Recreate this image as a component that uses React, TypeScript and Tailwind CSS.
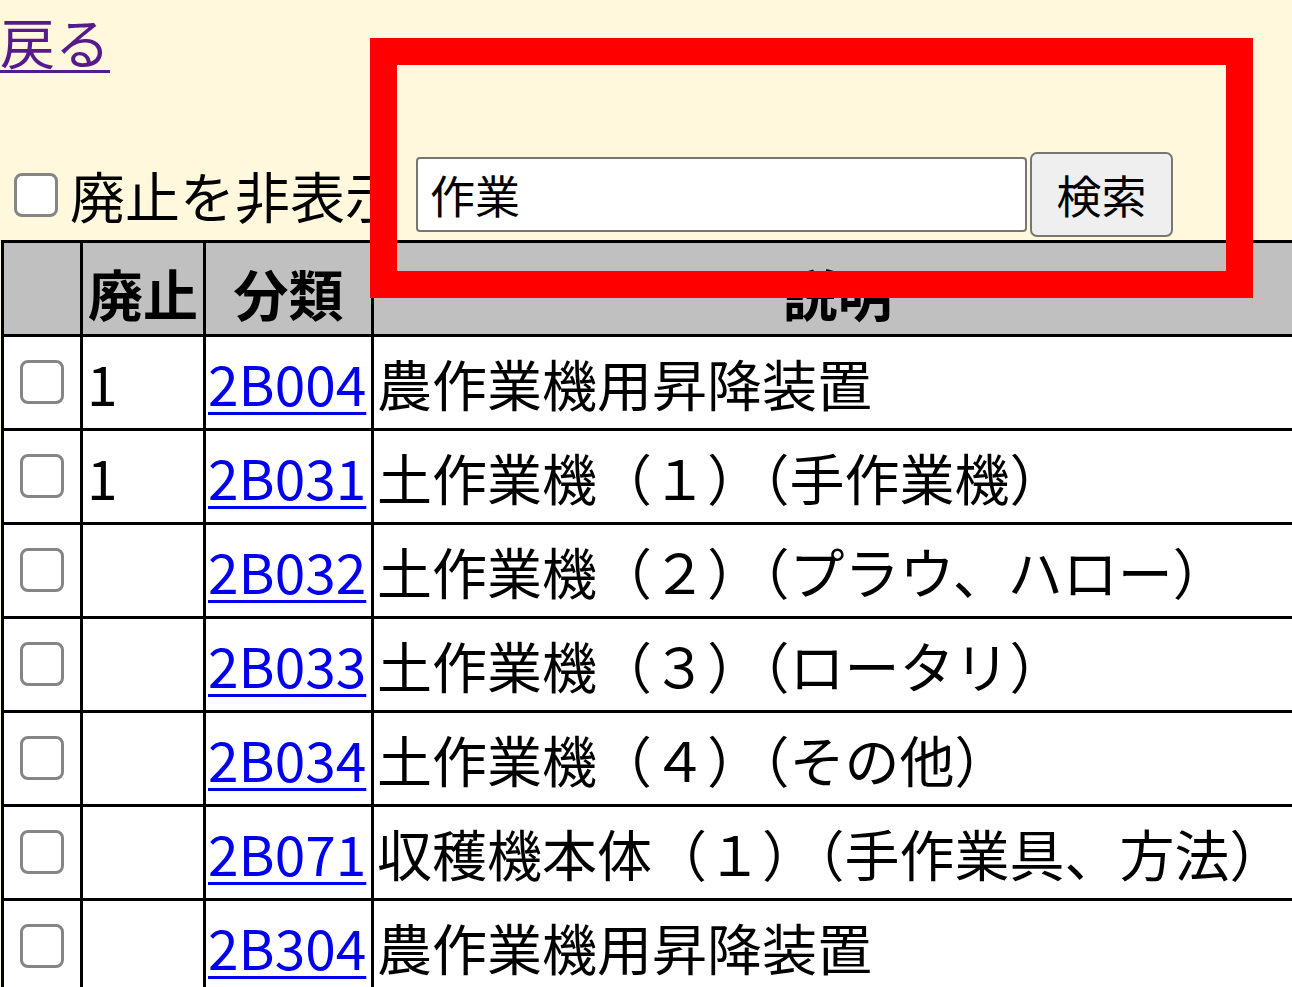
const rows = [
  { haishi: '1', code: '2B004', desc: '農作業機用昇降装置' },
  { haishi: '1', code: '2B031', desc: '土作業機（１）（手作業機）' },
  { haishi: '', code: '2B032', desc: '土作業機（２）（プラウ、ハロー）' },
  { haishi: '', code: '2B033', desc: '土作業機（３）（ロータリ）' },
  { haishi: '', code: '2B034', desc: '土作業機（４）（その他）' },
  { haishi: '', code: '2B071', desc: '収穫機本体（１）（手作業具、方法）' },
  { haishi: '', code: '2B304', desc: '農作業機用昇降装置' },
];

const Check = () => (
  <input
    type="checkbox"
    className="appearance-none block w-[44px] h-[44px] border-[3px] border-[#858585] rounded-[8px] bg-white"
  />
);

const App = () => {
  return (
    <div className="relative w-[1292px] h-[987px] overflow-hidden bg-[#fff8dc] text-black font-['Noto_Sans_CJK_JP',sans-serif]">
      <div className="h-[80px] pt-[3px]">
        <a href="#" className="text-[55px] leading-[74px] text-[#551a8b] underline underline-offset-[6px] decoration-[3px]">
          戻る
        </a>
      </div>

      <div className="mt-[72px] h-[85px] flex items-center">
        <div className="ml-[14px]">
          <Check />
        </div>
        <span className="ml-[12px] text-[55px] leading-none w-[346px] whitespace-nowrap">廃止を非表示</span>
        <input
          type="text"
          defaultValue="作業"
          className="w-[611px] h-[75px] bg-white border-2 border-[#767676] rounded-[4px] px-[12px] text-[45px] outline-none"
        />
        <button className="ml-[3px] w-[143px] h-[85px] bg-[#efefef] border-2 border-[#767676] rounded-[7px] text-[45px]">
          検索
        </button>
      </div>

      <table className="mt-[3px] ml-[1px] border-collapse text-[55px] w-[1300px] table-fixed">
        <colgroup>
          <col className="w-[79px]" />
          <col className="w-[123px]" />
          <col className="w-[168px]" />
          <col className="w-[930px]" />
        </colgroup>
        <thead>
          <tr className="h-[91px] bg-[#c0c0c0]">
            <th className="border-[3px] border-black"></th>
            <th className="border-[3px] border-black font-bold pt-[8px]">廃止</th>
            <th className="border-[3px] border-black font-bold pt-[8px]">分類</th>
            <th className="border-[3px] border-black font-bold pt-[8px]">説明</th>
          </tr>
        </thead>
        <tbody className="bg-white">
          {rows.map((r) => (
            <tr key={r.code} className="h-[94px]">
              <td className="border-[3px] border-black align-middle">
                <div className="flex justify-center">
                  <Check />
                </div>
              </td>
              <td className="border-[3px] border-black px-[4px] whitespace-nowrap">{r.haishi}</td>
              <td className="border-[3px] border-black px-[2px] whitespace-nowrap">
                <a href="#" className="text-[#0000ee] underline underline-offset-[6px] decoration-[3px]">
                  {r.code}
                </a>
              </td>
              <td className="border-[3px] border-black px-[3px] whitespace-nowrap">{r.desc}</td>
            </tr>
          ))}
        </tbody>
      </table>

      <div className="absolute left-[370px] top-[38px] w-[883px] h-[260px] border-[27px] border-[#ff0000]" />
    </div>
  );
};

export default App;
